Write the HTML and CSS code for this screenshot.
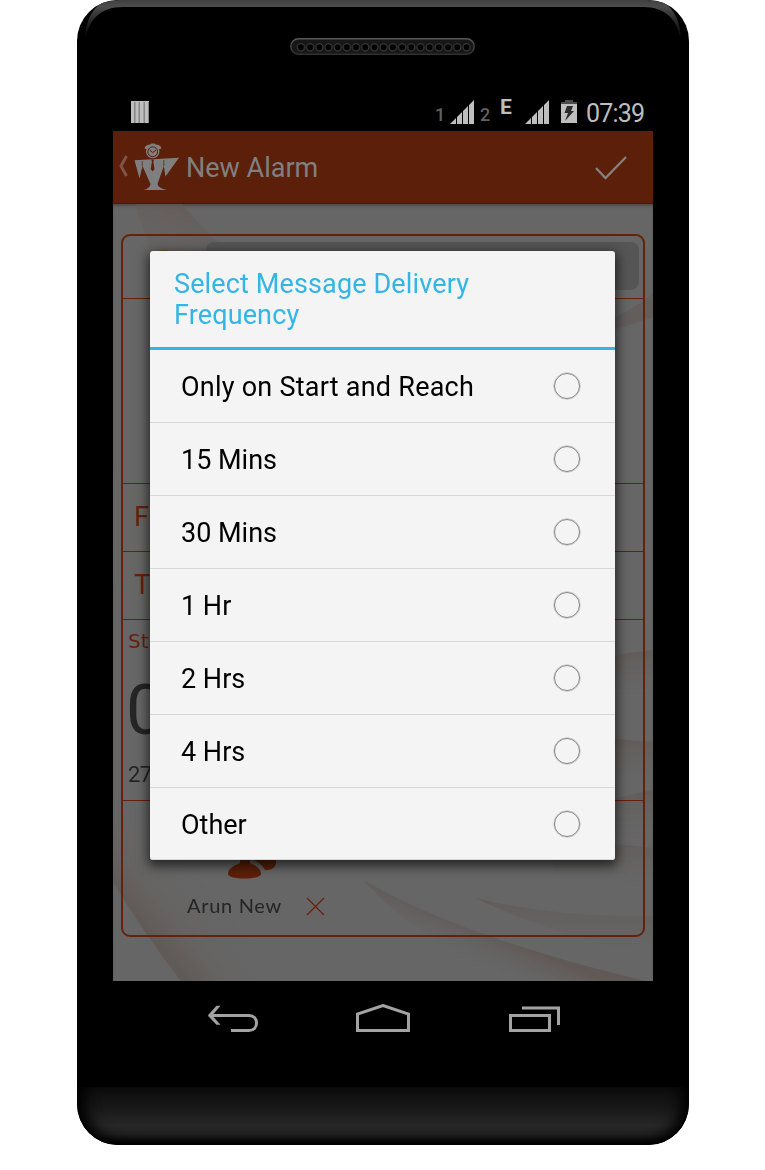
FILE: index.html
```html
<!DOCTYPE html>
<html lang="en">
<head>
<meta charset="utf-8">
<title>New Alarm</title>
<link rel="stylesheet" href="styles.css">
</head>
<body>
<div class="phone">
  <div class="bezel-top">
    <svg class="edge" width="612" height="46" viewBox="0 0 612 46">
      <defs>
        <linearGradient id="rim" x1="0" y1="0" x2="0" y2="1"><stop offset="0" stop-color="#404040"/><stop offset=".16" stop-color="#4c4c4c"/><stop offset=".5" stop-color="#262626"/><stop offset=".95" stop-color="#000"/></linearGradient>
      </defs>
      <path d="M8 42C8 24 13 10 26 2L42 0H570L586 2C599 10 604 24 604 42C601 20 589 7 566 7H46C23 7 11 20 8 42Z" fill="url(#rim)"/>
    </svg>
    <svg class="speaker" width="186" height="18" viewBox="0 0 186 18">
      <defs>
        <linearGradient id="spk" x1="0" y1="0" x2="0" y2="1"><stop offset="0" stop-color="#585858"/><stop offset="1" stop-color="#303030"/></linearGradient>
        <pattern id="hole" x="6.3" y="0" width="9.2" height="18" patternUnits="userSpaceOnUse"><circle cx="4.6" cy="9.3" r="3.6" fill="#000" stroke="#404040" stroke-width="1"/></pattern>
      </defs>
      <rect x=".8" y=".8" width="183.4" height="15.4" rx="7.7" fill="#171717" stroke="url(#spk)" stroke-width="1.5"/>
      <rect x="6.3" width="174.8" height="18" fill="url(#hole)"/>
    </svg>
  </div>
  <div class="screen">
    <div class="status">
      <svg class="bars" width="18" height="22" viewBox="0 0 18 22"><path fill="#bebebe" d="M0 0h18v22H0z"/><path fill="#858585" d="M3 1h1.500v21H3zM7.500 1H9v21H7.500zM12.500 1H14v21h-1.500zM17 1h1v21h-1z"/></svg>
      <span class="sim sim1">1</span>
      <svg class="signal" width="24" height="24" viewBox="0 0 24 24"><path fill="#bebebe" d="M0 24L6 18V24ZM7 24V17L12 12V24ZM13 24V11L18 6V24ZM19 24V5L24 0V24Z"/></svg>
      <span class="sim sim2">2</span>
      <span class="edge-net">E</span>
      <svg class="signal" width="24" height="24" viewBox="0 0 24 24"><path fill="#bebebe" d="M0 24L6 18V24ZM7 24V17L12 12V24ZM13 24V11L18 6V24ZM19 24V5L24 0V24Z"/></svg>
      <svg class="battery" width="16" height="23" viewBox="0 0 16 23"><path fill="#4b4b4b" d="M4 0h8v2h4v3H0V2h4z"/><path fill="#bebebe" d="M0 4h16v19H0z"/><path fill="#2b2b2b" d="M6 6h6l-2 5h3L4 21l3-8H3.500z"/></svg>
      <span class="clock">07:39</span>
    </div>
    <div class="appbar">
      <svg class="logo" width="62" height="50" viewBox="0 0 62 50">
        <path d="M9.500 14L4 24L9.500 34" fill="none" stroke="#805248" stroke-width="3"/>
        <g fill="#7f7f7f">
          <path d="M17.500 18.200L62 15.800L48.500 34.500L46.800 24L40.500 42Q41 46 50 48H27Q33 46 33.500 42L25.500 24L22.500 36.500Z"/>
          <circle cx="35.700" cy="9.500" r="6.800"/><path d="M27.500 6.500q1-4 6-4l1-1h3l1 1q5 0 6 4l-3 1-5-3h-3l-3 3z"/>
        </g>
        <circle cx="35.700" cy="9.800" r="4.900" fill="none" stroke="#5c1f09" stroke-width="1"/><path d="M32.500 8l3.200 2.500L39 8" fill="none" stroke="#5c1f09"/>
        <path d="M34.300 17.500h2.700L36.300 20l1.200 7-1.900 2.500L33.700 27l1.200-7z" fill="#5c1f09"/>
        <path d="M25.200 19v5M46.800 18v6" stroke="#5c1f09" stroke-width=".7"/>
      </svg>
      <span class="title">New Alarm</span>
      <svg class="check" width="34" height="26" viewBox="0 0 34 26"><path d="M2 13L11.500 23L32 2" fill="none" stroke="#858080" stroke-width="2.300"/></svg>
    </div>
    <div class="content">
      <svg class="waves" width="540" height="777" viewBox="0 0 540 777">
        <defs>
          <linearGradient id="w1" x1="0" y1="1" x2=".7" y2="0"><stop offset="0" stop-color="#6c6866" stop-opacity="0"/><stop offset="1" stop-color="#605753"/></linearGradient>
          <linearGradient id="w2" x1="0" y1="0" x2="0" y2="1"><stop offset="0" stop-color="#605854"/><stop offset="1" stop-color="#666" stop-opacity="0"/></linearGradient>
          <linearGradient id="w3" gradientUnits="userSpaceOnUse" x1="28" y1="730" x2="90" y2="680"><stop offset="0" stop-color="#5f5551"/><stop offset=".4" stop-color="#666260"/><stop offset="1" stop-color="#686868" stop-opacity="0"/></linearGradient>
          <linearGradient id="w4" gradientUnits="userSpaceOnUse" x1="385" y1="732" x2="372" y2="762"><stop offset="0" stop-color="#605652"/><stop offset="1" stop-color="#666" stop-opacity="0"/></linearGradient>
        </defs>
        <g opacity=".75">
          <path d="M22 0H69Q84 19 107 40L190 110H60Z" fill="url(#w1)"/>
          <path d="M0 260Q30 275 60 310V420L0 380Z" fill="#6a6866" opacity=".5"/>
          <path d="M0 678Q30 728 68 777H270Q110 710 0 580Z" fill="url(#w3)"/>
          <path d="M490 120Q520 105 540 90V113Q515 122 490 129Z" fill="#635d5a"/>
          <path d="M490 453Q515 449 540 446V490H490Z" fill="url(#w2)"/>
          <path d="M490 534Q515 536 540 538V580H490Z" fill="url(#w2)"/>
          <path d="M490 598Q515 591 540 586V630H490Z" fill="url(#w2)"/>
          <path d="M440 634Q495 639 540 644V680Q490 678 440 670Z" fill="url(#w2)"/>
          <path d="M362 694Q445 714 540 712V750Q450 735 362 694Z" fill="url(#w2)"/>
          <path d="M250 676C330 722 430 752 532 777H400Q310 740 250 676Z" fill="url(#w4)"/>
        </g>
      </svg>
      <div class="card">
        <div class="field name-row"><i class="dot"></i><div class="input"></div></div>
        <div class="field map-row"></div>
        <div class="field place">F</div>
        <div class="field place">T</div>
        <div class="field time-row">
          <div class="start">Sta</div>
          <div class="hour">0</div>
          <div class="date">27</div>
        </div>
        <div class="contact-row">
          <svg class="people" width="50" height="22" viewBox="0 0 50 22"><path fill="#5d1f09" d="M13 0H23V4C30 7 34 10 34 15C34 21 1 21 1 15C1 10 6 7 13 4ZM23 0H49V3C49 11 40 12 36 10C33 6 28 4 23 2Z"/><path d="M23 1C30 3 34 6 37 11" fill="none" stroke="#606060" stroke-width="2"/></svg>
          <div class="contact"><span>Arun New</span>
            <svg width="19" height="19" viewBox="0 0 19 19"><path d="M1 1L18 18M18 1L1 18" stroke="#66210a" stroke-width="1.200"/></svg>
          </div>
        </div>
      </div>
      <div class="dialog">
        <div class="dialog-title">Select Message Delivery<br>Frequency</div>
        <div class="option"><span class="wide">Only on Start and Reach</span><i class="radio"></i></div>
        <div class="option"><span>15 Mins</span><i class="radio"></i></div>
        <div class="option"><span>30 Mins</span><i class="radio"></i></div>
        <div class="option"><span>1 Hr</span><i class="radio"></i></div>
        <div class="option"><span>2 Hrs</span><i class="radio"></i></div>
        <div class="option"><span>4 Hrs</span><i class="radio"></i></div>
        <div class="option"><span>Other</span><i class="radio"></i></div>
      </div>
    </div>
  </div>
  <div class="nav">
    <svg width="52" height="30" viewBox="0 0 52 30"><path d="M3 11.500H41C51 11.500 51 26.500 41 26.500H23" fill="none" stroke="#a3a3a3" stroke-width="3"/><path d="M0 11.500L8.500 2H12L4 11.500L12 20.500H8.500Z" fill="#a3a3a3" stroke="#a3a3a3" stroke-width=".5"/></svg>
    <svg class="home" width="54" height="30" viewBox="0 0 54 30"><path d="M1.500 26.500V10L27 1.500L52.500 10V26.500Z" fill="none" stroke="#a3a3a3" stroke-width="3"/></svg>
    <svg width="52" height="30" viewBox="0 0 52 30"><path d="M1.500 11.500H40.500V26.500H1.500ZM13 4H49.500V21" fill="none" stroke="#a3a3a3" stroke-width="3"/></svg>
  </div>
  <div class="chin"></div>
</div>
</body>
</html>
```

FILE: styles.css
```css
* { box-sizing: border-box; }
body { margin: 0; background: #fff; font-family: Roboto, "Liberation Sans", sans-serif; }
svg { display: block; flex: none; }

.phone {
  width: 612px; height: 1145px; margin-left: 77px;
  background: #000; border-radius: 41px; overflow: hidden;
  display: flex; flex-direction: column; align-items: center;
}
.bezel-top { position: relative; width: 100%; height: 95px; padding: 38px 0 0 213px; flex: none; }
.edge { position: absolute; left: 0; top: 0; }

.screen { width: 540px; height: 886px; flex: none; }
.status { height: 36px; display: flex; align-items: flex-start; padding: 5px 0 0 18px; color: #bebebe; }
.bars { margin-top: 1px; }
.sim { font-size: 18px; line-height: 21px; font-weight: 500; color: #606060; margin-top: 4px; width: 11px; }
.sim1 { margin-left: 286px; }
.sim2 { margin-left: 6px; }
.signal { margin-left: 4px; }
.edge-net { font: 700 21px/21px Roboto, sans-serif; width: 13px; margin: -3px 8px 0 9px; }
.battery { margin-left: 12px; }
.clock { font-size: 25px; line-height: 29px; margin: -1px 0 0 9px; letter-spacing: -.8px; }

.appbar {
  height: 73px; background: #5c1f09; display: flex; align-items: center;
  padding: 0 25px 0 4px; color: #808080; border-bottom: 1px solid #45190b;
}
.title { font-size: 27px; margin: 2px 0 0 7px; flex: 1; }
.check { margin-top: 1px; }

.content { position: relative; height: 777px; background: #666; padding: 30px 8px; box-shadow: inset 0 3px 3px -1px #4b4b4b; }
.waves { position: absolute; left: 0; top: 0; }
.card {
  position: relative; width: 524px; height: 703px; border: 2px solid #66210a; border-radius: 9px;
  display: flex; flex-direction: column; color: #252525;
}
.field { border-bottom: 1px solid #66210a; flex: none; }
.name-row { height: 63px; padding: 6px 4px 0 32px; display: flex; justify-content: space-between; }
.dot { width: 22px; height: 22px; margin: 8px 0 0 -2px; border-radius: 50%; background: #6e552d; }
.input { width: 433px; height: 48px; border-radius: 8px; background: #555; }
.map-row { height: 185px; }
.place { height: 68px; padding: 0 0 0 11px; font: 27px/66px Roboto, sans-serif; color: #66210a; }
.time-row { height: 181px; padding: 9px 0 0 5px; }
.start { font: 20px/24px "DejaVu Sans", sans-serif; color: #66210a; }
.hour { font: 70px/80px Roboto, sans-serif; height: 80px; margin: 17px 0 0 -2px; }
.date { font: 22px/26px Roboto, sans-serif; margin-top: 12px; letter-spacing: -.5px; }
.contact-row { flex: 1; padding: 58px 0 0 64px; }
.people { margin-left: 40px; }
.contact { display: flex; align-items: center; gap: 24px; margin-top: 13px; font: 20px/26px Lato, sans-serif; letter-spacing: .7px; }
.contact span { margin-top: -2px; }

.dialog {
  position: absolute; left: 37px; top: 47px; width: 465px; height: 609px;
  background: #f4f4f4; border-radius: 3px; box-shadow: 0 4px 12px 2px rgba(0,0,0,.65), inset 0 -1px 0 #d5d9d9;
  color: #000; font-size: 27px;
}
.dialog-title { height: 99px; border-bottom: 3px solid #33b5e5; padding: 18px 24px 0; line-height: 31px; color: #33b5e5; letter-spacing: .13px; }
.option { height: 73px; border-bottom: 1px solid #d8d8d8; padding: 0 35px 0 31px; display: flex; align-items: center; justify-content: space-between; }
.option span { padding-top: 2px; }
.option .wide { letter-spacing: .24px; }
.option:last-child { border: 0; height: 72px; }
.option:last-child span { padding-top: 1px; }
.radio { width: 26px; height: 26px; border: 1px solid #858585; border-radius: 50%; box-shadow: 0 0 0 .5px #b5b5b5; }

.nav { width: 100%; height: 106px; padding: 23px 128px 0 131px; display: flex; justify-content: space-between; flex: none; }
.home { margin-left: -4px; }
.chin {
  width: 100%; height: 58px; flex: none; border-radius: 0 0 41px 41px;
  background: linear-gradient(#0c0c0c, #171717 35%, #272727 66%, #202020 82%, #000);
  box-shadow: inset 14px -4px 14px -6px #000, inset -14px -4px 14px -6px #000;
}
```
